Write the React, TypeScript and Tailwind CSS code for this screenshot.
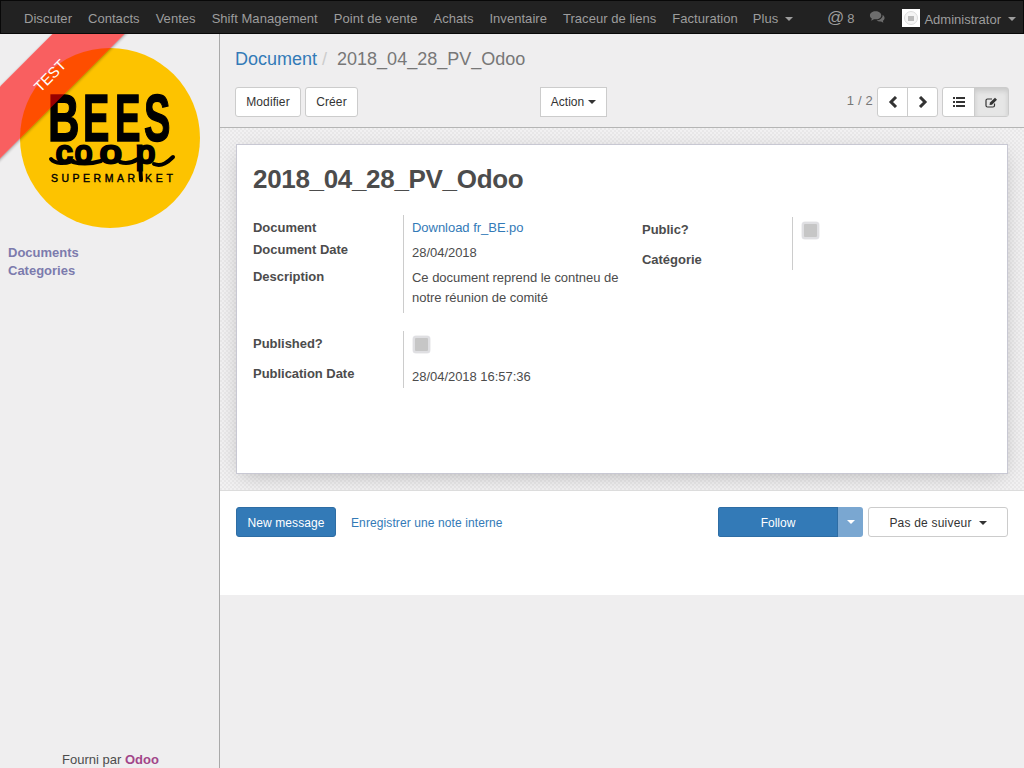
import React from "react";

const nav = ["Discuter","Contacts","Ventes","Shift Management","Point de vente","Achats","Inventaire","Traceur de liens","Facturation"];

function Caret({ className = "" }: { className?: string }) {
  return <span className={"inline-block w-0 h-0 border-x-4 border-x-transparent border-t-4 " + className} />;
}

function Letter({ ch, x, sx }: { ch: string; x: number; sx: number }) {
  return (
    <text transform={`translate(${x} 93) scale(${sx} 1)`} fontFamily="'Liberation Sans',sans-serif" fontWeight="700" fontSize="66" fill="#000" stroke="#000" strokeWidth="1.500">{ch}</text>
  );
}

function Script({ ch, x, sx }: { ch: string; x: number; sx: number }) {
  return (
    <text transform={`translate(${x} 115) scale(${sx} 1)`} fontFamily="'Liberation Sans',sans-serif" fontSize="31" fill="#000" stroke="#000" strokeWidth="2.800">{ch}</text>
  );
}

function Logo() {
  return (
    <svg viewBox="0 0 180 180" className="w-[180px] h-[180px] block">
      <circle cx="90" cy="90" r="90" fill="#fdc300" />
      <Letter ch="B" x={28} sx={0.66} />
      <Letter ch="E" x={63} sx={0.6} />
      <Letter ch="E" x={95} sx={0.58} />
      <Letter ch="S" x={124} sx={0.6} />
      <Script ch="c" x={36} sx={1.05} />
      <Script ch="o" x={55} sx={1} />
      <Script ch="o" x={80} sx={1.25} />
      <Script ch="p" x={116} sx={1.1} />
      <path d="M31 111c4 5 14 5 22 2M53 114c8 2 18 2 28-1M100 114c6 2 12 1 18-3M120 114l1 18M134 116c8 3 14-2 19-7" fill="none" stroke="#000" strokeWidth="4" strokeLinecap="round" />
      <text x="31" y="134" fontFamily="'Liberation Sans',sans-serif" fontSize="10.500" fill="#000" stroke="#000" strokeWidth="0.400" textLength="84" lengthAdjust="spacing">SUPERMAR</text>
      <text x="125" y="134" fontFamily="'Liberation Sans',sans-serif" fontSize="10.500" fill="#000" stroke="#000" strokeWidth="0.400" textLength="28" lengthAdjust="spacing">KET</text>
    </svg>
  );
}

function Field({ label, children, h, top = "" }: { label: string; children: React.ReactNode; h: string; top?: string }) {
  return (
    <div className={"flex " + h}>
      <div className={"w-[150px] shrink-0 font-bold text-[#4c4c4c] " + top}>{label}</div>
      <div className="flex-1 border-l border-[#ccc] pl-2">{children}</div>
    </div>
  );
}

function Check() {
  return (
    <span className="block ml-px w-[17px] h-[17px] rounded-[3px] border-[2px] border-[#dfdfe2] bg-[#c6c6c6] shadow-[0_0_0_0.5px_#e5e5e8]" />
  );
}

export default function App() {
  return (
    <div className="w-[1024px] h-[768px] overflow-hidden flex flex-col bg-[#efeeef] text-[13px] leading-[18px] text-[#4c4c4c] font-['Liberation_Sans',Arial,sans-serif]">
      <nav className="h-[34px] shrink-0 bg-[#222] border border-[#080808] flex items-center pl-[15px] pr-[7px] pt-[3px] text-[#9d9d9d] text-[13px]">
        <div className="flex gap-4 ml-[8px] tracking-[0.04px]">
          {nav.map((n) => <span key={n}>{n}</span>)}
          <span className="flex items-center gap-[7px] -ml-px">Plus <Caret className="border-t-[#9d9d9d]" /></span>
        </div>
        <div className="ml-auto flex items-center">
          <span className="text-[17px] mr-[3px] leading-none -mt-[3px]">@</span>
          <span className="mr-[15px]">8</span>
          <svg viewBox="0 0 18 14" className="w-[17px] h-[14px] mr-[16px] -mt-[3px]" fill="#6d6d6d">
            <path d="M7 1C3.500 1 1 3 1 5.300c0 1.300.8 2.400 2 3.200L2.300 11l3-1.700c.6.1 1.100.2 1.700.2 3.500 0 6-2 6-4.200S10.500 1 7 1z" />
            <path d="M14.300 4.500c.1.300.1.600.1.900 0 2.700-2.800 4.900-6.400 5.200.9.800 2.200 1.200 3.600 1.200.4 0 .8 0 1.200-.1l2.400 1.300-.5-2c1.100-.7 1.800-1.700 1.800-2.900 0-1.400-.7-2.500-2.200-3.600z" />
          </svg>
          <span className="w-[18px] h-[18px] bg-white mr-1 -mt-[1px] flex items-center justify-center">
            <span className="w-[14px] h-[14px] rounded-full border border-[#ddd] bg-[#f5f5f5] flex items-center justify-center">
              <span className="w-[6px] h-[5px] bg-[#bbb]" />
            </span>
          </span>
          <span className="pt-[2px]">Administrator</span>
          <Caret className="border-t-[#9d9d9d] ml-[7px]" />
        </div>
      </nav>

      <div className="flex-1 flex min-h-0">
        <aside className="relative w-[220px] shrink-0 border-r border-[#a9a9a9] flex flex-col overflow-hidden">
          <div className="pt-[14px] pl-[20px]"><Logo /></div>
          <div className="mt-[16px] pl-2 font-bold text-[#7c7bad]">
            <div>Documents</div>
            <div>Categories</div>
          </div>
          <div className="mt-auto text-center leading-[18px] mb-[-1px] pl-[2px]">
            Fourni par <span className="font-bold text-[#a24689]">Odoo</span>
          </div>
          <div className="absolute left-[-83px] top-[16px] w-[260px] h-[51px] pl-[4px] -rotate-45 bg-[#ff0000]/60 shadow-[0_1px_3px_rgba(0,0,0,0.3)] text-white text-[15px] leading-[56px] text-center">
            TEST
          </div>
        </aside>

        <main className="flex-1 min-w-0 flex flex-col">
          <div className="h-[94px] shrink-0 border-b border-[#b5b5b5] px-[15px] flex flex-col">
            <div className="mt-[13px] h-[24px] flex items-center text-[18px] leading-[24px]">
              <span className="text-[#337ab7]">Document</span>
              <span className="text-[#ccc] ml-[5px]">/</span>
              <span className="text-[#777] ml-[10px]">2018_04_28_PV_Odoo</span>
            </div>
            <div className="mt-[16px] flex items-center">
              <div className="w-[305px] flex gap-1">
                <button className="h-[30px] w-[66px] bg-white border border-[#ccc] rounded-[3px] text-[12px] text-[#333] tracking-[0.1px]">Modifier</button>
                <button className="h-[30px] w-[53px] bg-white border border-[#ccc] rounded-[3px] text-[12px] text-[#333] tracking-[0.1px]">Créer</button>
              </div>
              <button className="h-[30px] w-[67px] bg-white border border-[#ccc] text-[12px] text-[#333] flex items-center justify-center gap-1">Action <Caret className="border-t-[#333]" /></button>
              <div className="ml-auto flex items-center">
                <span className="text-[13px] mr-[4px] -mt-[2px] text-[#777] tracking-[0.2px]">1 / 2</span>
                <div className="flex h-[30px] border border-[#ccc] rounded-[3px] bg-white mr-[4px]">
                  <span className="w-[30px] flex items-center justify-center border-r border-[#ccc]">
                    <svg viewBox="0 0 10 12" className="w-[10px] h-[12px]" fill="none" stroke="#333" strokeWidth="3"><path d="M8 1 3 6l5 5" /></svg>
                  </span>
                  <span className="w-[29px] flex items-center justify-center">
                    <svg viewBox="0 0 10 12" className="w-[10px] h-[12px]" fill="none" stroke="#333" strokeWidth="3"><path d="M2 1l5 5-5 5" /></svg>
                  </span>
                </div>
                <div className="flex h-[30px] border border-[#ccc] rounded-[3px] bg-white">
                  <span className="w-[32px] flex items-center justify-center border-r border-[#ccc]">
                    <svg viewBox="0 0 12 10" className="w-[12px] h-[10px]" fill="#333"><path d="M0 0h2v2H0zM3 0h9v2H3zM0 4h2v2H0zM3 4h9v2H3zM0 8h2v2H0zM3 8h9v2H3z" /></svg>
                  </span>
                  <span className="w-[33px] flex items-center justify-center bg-[#e6e6e6] shadow-[inset_0_3px_5px_rgba(0,0,0,0.125)]">
                    <svg viewBox="0 0 13 11" className="w-[13px] h-[11px]" fill="none" stroke="#333" strokeWidth="1.200"><path d="M9.500 6.500v2a1.500 1.500 0 0 1-1.500 1.500H2.500A1.500 1.500 0 0 1 1 8.500v-5A1.500 1.500 0 0 1 2.500 2H7" /><path d="M4.500 8 5 5.500 10 .8l2 2-5 5z" fill="#333" stroke="none" /></svg>
                  </span>
                </div>
              </div>
            </div>
          </div>

          <div className="h-[362px] shrink-0 px-[16px] pt-[16px] bg-[repeating-conic-gradient(#f2f1f2_0_25%,#e9e8e9_0_50%)] bg-[length:4px_4px]">
            <div className="h-[330px] bg-white border border-[#c8c8d3] shadow-[0_5px_20px_-5px_rgba(0,0,0,0.25)] px-[16px] pt-[16px]">
              <h1 className="text-[26px] leading-[36px] font-bold text-[#4c4c4c] tracking-[-0.32px]">2018_04_28_PV_Odoo</h1>
              <div className="flex mt-[18px] tracking-[-0.03px]">
                <div className="w-[389px]">
                  <Field label="Document" h="h-[24px]" top="pt-[4px]"><div className="text-[#337ab7] pt-[4px]">Download fr_BE.po</div></Field>
                  <Field label="Document Date" h="h-[27px]" top="pt-[2px]"><div className="pt-[5px]">28/04/2018</div></Field>
                  <Field label="Description" h="h-[47px]" top="pt-[2px]"><div className="leading-[20px] pt-[2px] w-[215px]">Ce document reprend le contneu de notre réunion de comité</div></Field>
                  <div className="mt-[18px]">
                    <Field label="Published?" h="h-[30px]" top="pt-[4px]"><div className="pt-[5px]"><Check /></div></Field>
                    <Field label="Publication Date" h="h-[27px]" top="pt-[4px]"><div className="pt-[7px]">28/04/2018 16:57:36</div></Field>
                  </div>
                </div>
                <div className="flex-1 pt-[2px] pr-[16px]">
                  <Field label="Public?" h="h-[30px]" top="pt-[4px]"><div className="pt-[5px]"><Check /></div></Field>
                  <Field label="Catégorie" h="h-[23px]" top="pt-[4px]"><div /></Field>
                </div>
              </div>
            </div>
          </div>

          <div className="h-[105px] shrink-0 bg-white border-t border-[#dcdcdc] px-[16px] pt-[16px]">
            <div className="flex items-center">
              <button className="h-[30px] w-[100px] pt-[1px] bg-[#337ab7] border border-[#2e6da4] rounded-[3px] text-white text-[12px] tracking-[0.1px]">New message</button>
              <span className="ml-[15px] pt-[1px] text-[#337ab7] text-[12px] tracking-[0.1px]">Enregistrer une note interne</span>
              <div className="ml-auto flex items-center">
                <div className="flex h-[30px] w-[145px] rounded-[3px] overflow-hidden text-white text-[12px]">
                  <span className="flex-1 pt-[1px] bg-[#337ab7] border border-[#2e6da4] flex items-center justify-center">Follow</span>
                  <span className="w-[25px] bg-[#7aa7d1] flex items-center justify-center"><Caret className="border-t-white" /></span>
                </div>
                <button className="ml-[5px] pt-[1px] h-[30px] w-[140px] bg-white border border-[#ccc] rounded-[3px] text-[12px] text-[#333] tracking-[0.2px] flex items-center justify-center gap-[7px]">Pas de suiveur <Caret className="border-t-[#333]" /></button>
              </div>
            </div>
          </div>
        </main>
      </div>
    </div>
  );
}
